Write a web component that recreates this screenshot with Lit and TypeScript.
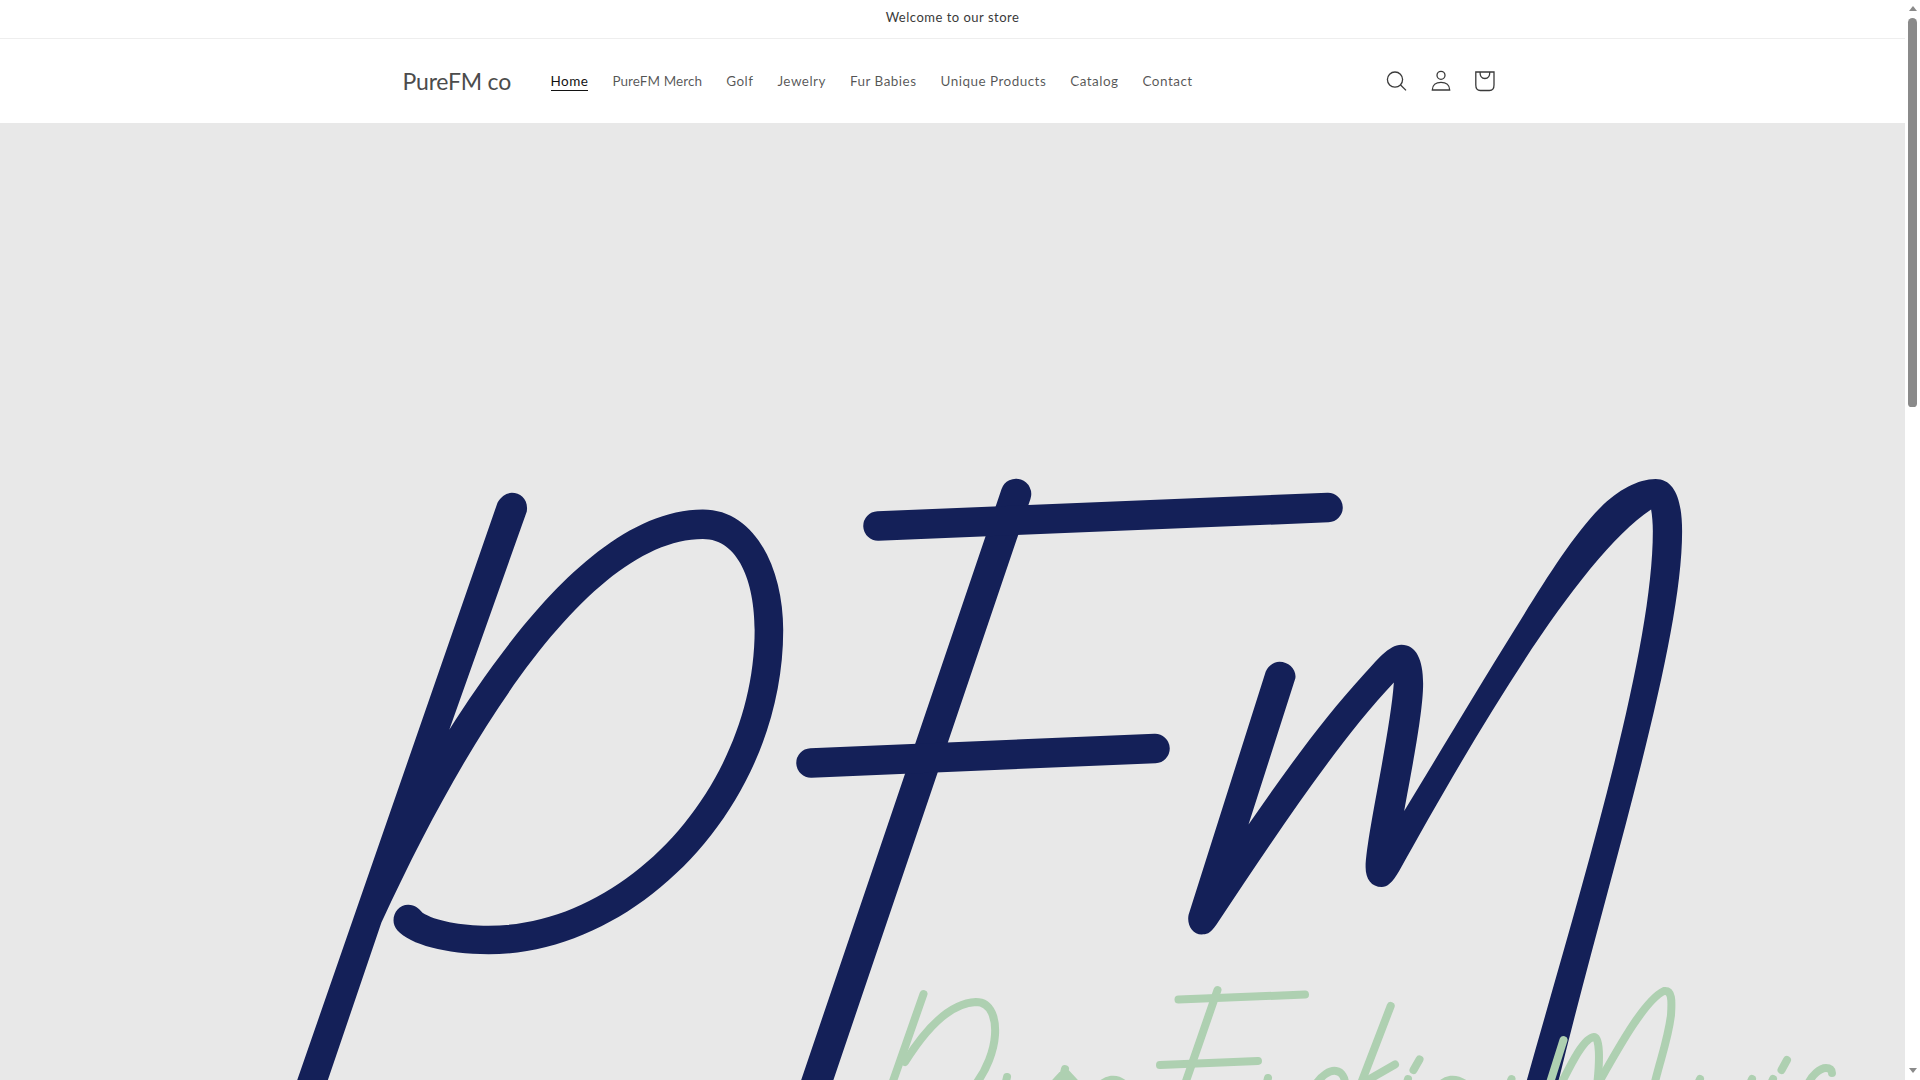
import { LitElement, html, css, svg } from "lit";
import { customElement } from "lit/decorators.js";

const NAV = ["Home", "PureFM Merch", "Golf", "Jewelry", "Fur Babies", "Unique Products", "Catalog", "Contact"];

const P_D = "M665,108 C675,92 690,83 705,83 C730,83 752,100 747,130 L530,682 C680,470 950,125 1240,125 C1390,125 1465,280 1465,430 C1465,870 1060,1250 640,1250 C520,1250 420,1225 385,1190 C360,1165 380,1125 415,1125 C435,1125 445,1135 455,1145 C490,1165 560,1178 640,1178 C1030,1178 1385,820 1385,430 C1385,310 1340,200 1240,200 C950,200 620,620 340,1170 L178,1600 L92,1600 Z";
const M_D = "M278,535 C288,518 303,510 318,510 C345,510 368,530 364,552 L228,922 C340,780 450,650 560,545 C600,507 635,467 672,467 C715,467 735,505 735,565 C735,640 700,790 680,888 C790,730 900,570 1000,430 C1080,318 1165,195 1250,120 C1300,76 1360,48 1410,48 C1465,48 1487,100 1487,180 C1487,480 1260,1090 1120,1600 L1026,1600 C1180,1120 1402,500 1402,180 C1402,160 1400,140 1397,125 C1180,250 870,720 665,1040 C645,1070 630,1080 615,1080 C585,1080 568,1060 568,1030 C568,960 640,690 650,563 C480,720 300,960 135,1175 C115,1200 105,1200 92,1200 C65,1200 48,1175 54,1150 Z";

const GREEN = [
  "M923.5,994 L892,1084",
  "M905,1062 C925,1030 950,1003 976,1002 C992,1002 996,1020 995,1035 C994,1050 987,1070 975,1085",
  "M1007,1077 L1005,1086",
  "M1065,1069 L1060,1088 M1065,1072 L1078,1086 M1065,1072 L1052,1086",
  "M1100,1086 C1106,1079 1116,1077 1124,1084",
  "M1178.5,999.5 L1305,994.5",
  "M1160,1065 L1258,1061",
  "M1217.5,990 L1185,1084",
  "M1268,1078 L1266,1086",
  "M1316,1084 C1322,1075 1330,1070 1336,1071 C1342,1072 1345,1078 1345,1084",
  "M1390.7,1006 L1360,1086",
  "M1395,1064.5 L1368,1080",
  "M1419.5,1059.5 L1413.5,1070",
  "M1408,1079 L1406,1086",
  "M1440,1086 C1445,1079 1455,1077 1465,1084",
  "M1511.5,1079 L1509,1086",
  "M1563.5,1040 L1549,1086",
  "M1560,1086 C1572,1062 1584,1038 1594,1037 C1600,1037 1600,1060 1597,1086",
  "M1598,1084 C1620,1045 1645,1000 1664,991 C1672,990 1672,1000 1671,1015 C1668,1040 1660,1060 1654,1086",
  "M1700,1079 L1697,1086",
  "M1752,1079 L1749,1086",
  "M1773,1079 L1770,1086",
  "M1787,1060 L1781.5,1070",
  "M1808,1084 C1812,1075 1820,1068 1826,1068 C1830,1068 1832,1070 1832,1073",
];

@customElement("app-root")
export class AppRoot extends LitElement {
  static styles = css`
    :host { display: flex; height: 1080px; overflow: hidden; background: #fff; font-family: "Lato", "Liberation Sans", sans-serif; color: rgba(18,18,18,.72); }
    .main { flex: 1; min-width: 0; display: flex; flex-direction: column; }
    .announce { flex: none; height: 34px; padding-bottom: 4px; border-bottom: 1px solid #eeeeee; display: flex; align-items: center; justify-content: center; font-size: 13px; letter-spacing: .5px; color: #3a3a3a; }
    .header { flex: none; height: 84px; width: 1100px; margin: 0 auto; display: flex; align-items: center; }
    .logo { font-size: 23px; letter-spacing: -.2px; color: #4c4c4c; width: 136px; flex: none; }
    nav { display: flex; }
    nav a { padding: 0 12px; font-size: 13.5px; letter-spacing: .47px; line-height: 44px; white-space: nowrap; }
    nav a.tight { letter-spacing: .08px; }
    nav a span { display: inline-block; line-height: 18px; }
    nav a.active { color: #121212; }
    nav a.active span { border-bottom: 1px solid #121212; }
    .icons { margin-left: auto; margin-right: -3.5px; display: flex; }
    .icons button { width: 44px; height: 44px; padding: 0; border: 0; background: none; display: block; }
    .icons svg { display: block; width: 44px; height: 44px; fill: none; stroke: #3a3a3a; stroke-width: 1.3; }
    .hero { flex: 1; min-height: 0; background: #e8e8e8; overflow: hidden; }
    .art { display: block; width: 1905px; height: 957px; }
    .navy { fill: #142058; }
    .bar { stroke: #142058; fill: none; stroke-linecap: round; }
    .green { stroke: #aed0b1; fill: none; stroke-width: 8; stroke-linecap: round; stroke-linejoin: round; }
    .scroll { flex: none; width: 15px; display: flex; flex-direction: column; align-items: center; background: #fff; padding-top: 6px; box-sizing: border-box; }
    .up, .down { width: 0; height: 0; border-left: 4.5px solid transparent; border-right: 4.5px solid transparent; }
    .up { border-bottom: 5px solid #8a8a8a; }
    .down { border-top: 5.5px solid #8a8a8a; margin-top: auto; margin-bottom: 7px; }
    .thumb { width: 9px; height: 389px; margin-top: 7px; background: #8a8a8a; border-radius: 5px 5px 4px 4px; }
  `;

  render() {
    return html`
      <div class="main">
        <div class="announce">Welcome to our store</div>
        <header class="header">
          <div class="logo">PureFM co</div>
          <nav>${NAV.map((n, i) => html`<a class=${i === 0 ? "active" : i === 1 ? "tight" : ""}><span>${n}</span></a>`)}</nav>
          <div class="icons">
            <button aria-label="Search"><svg viewBox="0 0 44 44"><circle cx="21" cy="20.6" r="7.6"/><path d="M26.6 26 L32 31.4"/></svg></button>
            <button aria-label="Account"><svg viewBox="0 0 44 44"><circle cx="23" cy="16.3" r="4"/><path d="M14.3 31 C14.3 26 18 23.3 23 23.3 C28 23.3 31.7 26 31.7 31 Z"/></svg></button>
            <button aria-label="Cart"><svg viewBox="0 0 44 44"><path d="M13.8 13 H32 V26 C32 29.5 30.2 31.5 27.5 31.5 H18.3 C15.6 31.5 13.8 29.5 13.8 26 Z M18 13 C18 17 20 19.5 22.9 19.5 C25.8 19.5 27.8 17 27.8 13"/></svg></button>
          </div>
        </header>
        <div class="hero">
          <svg class="art" viewBox="0 123 1905 957" role="img" aria-label="PFM Pure Fucking Music logo">
            <g transform="translate(260 460) scale(.35714 .3954)"><path class="navy" d=${P_D}/></g>
            <path class="bar" stroke-width="30.5" d="M1016,494 L780,1190"/>
            <path class="bar" stroke-width="29.5" d="M878,526 L1328,507.5"/>
            <path class="bar" stroke-width="29.5" d="M811,763 L1155,748.5"/>
            <g transform="translate(1170 460) scale(.34439 .3954)"><path class="navy" d=${M_D}/></g>
            ${GREEN.map((d) => svg`<path class="green" d=${d}/>`)}
          </svg>
        </div>
      </div>
      <div class="scroll"><div class="up"></div><div class="thumb"></div><div class="down"></div></div>
    `;
  }
}
